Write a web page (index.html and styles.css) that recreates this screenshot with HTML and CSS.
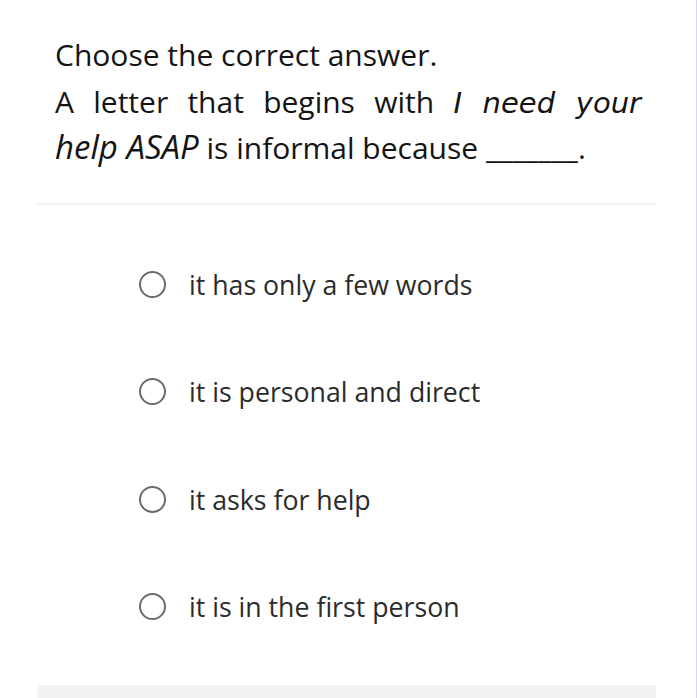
FILE: index.html
```html
<!DOCTYPE html>
<html lang="en">
<head>
<meta charset="utf-8">
<link rel="stylesheet" href="styles.css">
</head>
<body>
<div class="page">
  <div class="question">
    <p class="line">Choose the correct answer.</p>
    <p class="stem">A letter that begins with <span class="alt">I need your</span> <em class="phrase">help ASAP</em> is informal because _______.</p>
  </div>
  <hr class="divider">
  <ul class="options">
    <li class="option"><span class="radio"></span><span class="label">it has only a few words</span></li>
    <li class="option"><span class="radio"></span><span class="label">it is personal and direct</span></li>
    <li class="option"><span class="radio"></span><span class="label">it asks for help</span></li>
    <li class="option"><span class="radio"></span><span class="label">it is in the first person</span></li>
  </ul>
  <div class="footer"></div>
</div>
</body>
</html>
```
FILE: styles.css
```css
html, body {
  margin: 0;
  padding: 0;
  background: #fff;
}
body {
  font-family: "Open Sans", "Liberation Sans", sans-serif;
  color: #141414;
  border-right: 1px solid #ddd6ee;
  height: 698px;
  box-sizing: border-box;
  overflow: hidden;
}
.page {
  padding: 0 40px 0 37px;
}
.question {
  padding: 32px 15px 0 18px;
  font-size: 30px;
  line-height: 46.5px;
}
.question p {
  margin: 0;
}
.stem {
  text-align: justify;
}
.alt {
  font-family: "DejaVu Sans", sans-serif;
  font-style: oblique;
  font-size: 29px;
  line-height: 1;
}
.phrase {
  white-space: nowrap;
  font-size: 33px;
  line-height: 1;
}
.divider {
  border: 0;
  height: 2px;
  background: #f2f2f2;
  margin: 31px 0 0 0;
}
.options {
  list-style: none;
  margin: 0;
  padding: 26px 0 0 102px;
}
.option {
  display: flex;
  align-items: center;
  height: 107.5px;
}
.radio {
  width: 23px;
  height: 23px;
  border: 2px solid #6b6b6b;
  border-radius: 50%;
  flex: none;
}
.label {
  margin-left: 23px;
  font-size: 26.7px;
  color: #2b2b2b;
}
.footer {
  height: 40px;
  background: #f2f2f2;
  margin-top: 24px;
}
```
